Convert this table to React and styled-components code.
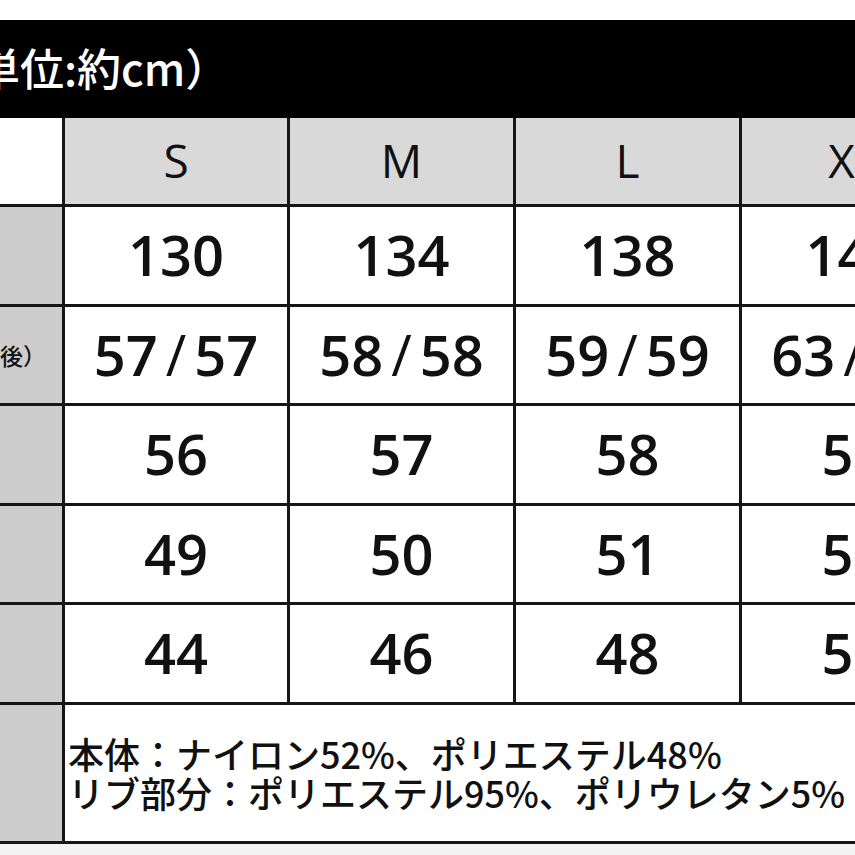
import React from "react";
import styled, { createGlobalStyle } from "styled-components";

const Global = createGlobalStyle`
  html, body { margin: 0; padding: 0; background: #ffffff; overflow: hidden; }
  #root { width: 855px; height: 855px; overflow: hidden; }
`;

const Page = styled.div`
  width: 855px;
  height: 855px;
  overflow: hidden;
  background: #f3f3f3;
  padding-top: 20px;
  box-sizing: border-box;
  background-image: linear-gradient(#ffffff 0 20px, transparent 20px);
  font-family: "Open Sans", "Noto Sans CJK JP", sans-serif;
`;

const TitleBar = styled.div`
  height: 98px;
  background: #000000;
  display: flex;
  align-items: center;
  overflow: hidden;
`;

const Title = styled.div`
  margin-left: -24px;
  color: #ffffff;
  font-family: "Noto Sans CJK JP", sans-serif;
  font-size: 44px;
  font-weight: 500;
  white-space: nowrap;
  line-height: 1;
  padding-bottom: 4px;
`;

const Grid = styled.div`
  display: grid;
  width: 969px;
  grid-template-columns: 62px 222px 223px 223px 223px;
  grid-template-rows: 86px repeat(5, 96.5px) 136.5px;
  column-gap: 3px;
  row-gap: 3px;
  background: #161616;
  border-bottom: 3px solid #161616;
`;

const Cell = styled.div`
  display: flex;
  align-items: center;
  justify-content: center;
  background: ${(p) => p.$bg || "#ffffff"};
  color: #111111;
  overflow: hidden;
  white-space: nowrap;
`;

const LabelCell = styled(Cell)`
  justify-content: flex-start;
  background: ${(p) => (p.$blank ? "#ffffff" : "#cdcdcd")};
  font-family: "Noto Sans CJK JP", sans-serif;
  font-size: 23px;
  font-weight: 500;
`;

const SizeCell = styled(Cell)`
  background: #d9d9d9;
  font-size: 46px;
  font-weight: 400;
  padding-bottom: 2px;
`;

const ValueCell = styled(Cell)`
  font-size: 56px;
  font-weight: 600;
  padding-bottom: 2px;
`;

const Slash = styled.span`
  margin: 0 8px;
  font-weight: 500;
`;

const NoteCell = styled(Cell)`
  grid-column: 2 / span 4;
  justify-content: flex-start;
  padding-left: 3px;
  padding-top: 0;
  font-family: "Noto Sans CJK JP", sans-serif;
  font-size: 36px;
  font-weight: 500;
  line-height: 39px;
`;

const NoteLines = styled.div`
  display: flex;
  flex-direction: column;
`;

const sizes = ["S", "M", "L", "XL"];
const rows = [
  { label: "", values: ["130", "134", "138", "142"] },
  { label: "後）", values: ["57/57", "58/58", "59/59", "63/63"] },
  { label: "", values: ["56", "57", "58", "59"] },
  { label: "", values: ["49", "50", "51", "52"] },
  { label: "", values: ["44", "46", "48", "50"] },
];

function renderValue(v) {
  if (!v.includes("/")) return v;
  const [a, b] = v.split("/");
  return (
    <>
      {a}
      <Slash>/</Slash>
      {b}
    </>
  );
}

export default function App() {
  return (
    <>
      <Global />
      <Page>
        <TitleBar>
          <Title>単位:約cm）</Title>
        </TitleBar>
        <Grid>
          <LabelCell $blank />
          {sizes.map((s) => (
            <SizeCell key={s}>{s}</SizeCell>
          ))}
          {rows.map((r, i) => (
            <React.Fragment key={i}>
              <LabelCell>{r.label}</LabelCell>
              {r.values.map((v, j) => (
                <ValueCell key={j}>{renderValue(v)}</ValueCell>
              ))}
            </React.Fragment>
          ))}
          <LabelCell />
          <NoteCell>
            <NoteLines>
              <span>本体：ナイロン52%、ポリエステル48%</span>
              <span>リブ部分：ポリエステル95%、ポリウレタン5%</span>
            </NoteLines>
          </NoteCell>
        </Grid>
      </Page>
    </>
  );
}
